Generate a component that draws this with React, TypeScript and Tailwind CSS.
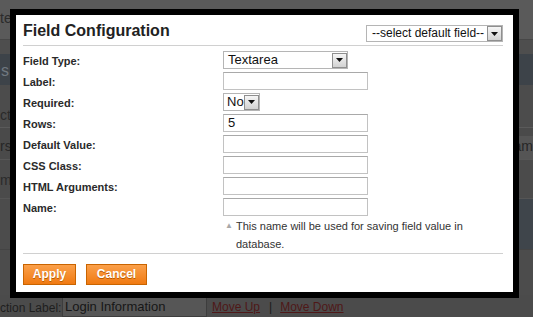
import React from "react";

function DropBtn({ className = "" }: { className?: string }) {
  return (
    <div
      className={
        "flex items-center justify-center w-[15px] h-[15px] border border-[#8f8f8f] bg-[linear-gradient(to_bottom,#f6f6f6,#d2d2d2)] " +
        className
      }
    >
      <svg width="7" height="4" viewBox="0 0 7 4">
        <path d="M0 0 L7 0 L3.5 4 Z" fill="#111" />
      </svg>
    </div>
  );
}

function TextInput({ value = "" }: { value?: string }) {
  return (
    <div className="w-[145px] h-[18px] border border-[#c2c2c2] border-t-[#a9a9a9] bg-white px-[4px] text-[13px] leading-[16px] text-[#111]">
      {value}
    </div>
  );
}

const rows: { label: string; control: React.ReactNode }[] = [
  {
    label: "Field Type:",
    control: (
      <div className="w-[125px] h-[18px] border border-[#b5b5b5] bg-white flex items-center justify-between pl-[4px] pr-[0px]">
        <span className="text-[13px] leading-[16px] text-[#111]">Textarea</span>
        <DropBtn />
      </div>
    ),
  },
  { label: "Label:", control: <TextInput /> },
  {
    label: "Required:",
    control: (
      <div className="w-[37px] h-[18px] border border-[#b5b5b5] bg-white flex items-center justify-between pl-[3px]">
        <span className="text-[13px] leading-[16px] text-[#111]">No</span>
        <DropBtn />
      </div>
    ),
  },
  { label: "Rows:", control: <TextInput value="5" /> },
  { label: "Default Value:", control: <TextInput /> },
  { label: "CSS Class:", control: <TextInput /> },
  { label: "HTML Arguments:", control: <TextInput /> },
  { label: "Name:", control: <TextInput /> },
];

export default function App() {
  return (
    <div
      className="relative w-[533px] h-[317px] overflow-hidden bg-[#4b4b4b]"
      style={{ fontFamily: '"Liberation Sans", Arial, sans-serif' }}
    >
      {/* dimmed page behind */}
      <div className="flex flex-col w-full h-full">
        <div className="h-[41px] bg-[#5a5a5a] border-b border-[#474747] text-[14px] text-[#2b2b2b] pt-[8px]">
          te
        </div>
        <div className="h-[14px] bg-[#4e4e4e]" />
        <div className="h-[32px] bg-[#3d4349] text-[16px] text-[#707880] pt-[5px] pl-[1px]">s</div>
        <div className="h-[43px] bg-[#4c4c4c] border-b border-[#5a5a5a] text-[14px] text-[#2a2a2a] pt-[20px]">
          cti
        </div>
        <div className="h-[33px] bg-[#4a4a4a] border-b border-[#575757] flex justify-between text-[14px] text-[#262626] pt-[8px]">
          <span>rs</span>
          <span className="bg-[#555] pl-[2px]">am</span>
        </div>
        <div className="h-[40px] bg-[#4b4b4b] text-[14px] text-[#2a2a2a] pt-[10px] border-b border-[#555]">
          m
        </div>
        <div className="h-[52px] bg-[#4c4c4c] flex justify-end border-b border-[#444]">
          <div className="w-[14px] h-full bg-[#3f454b]" />
        </div>
        <div className="h-[46px] bg-[#4c4c4c]" />
        <div className="flex-1 bg-[#4b4b4b] flex items-start pt-[2px] text-[#1e1e1e]">
          <span className="w-[60px] text-[12px] leading-[16px] mt-[3px] whitespace-nowrap">ction Label:</span>
          <div className="ml-[2px] w-[145px] h-[20px] border border-[#3d3d3d] bg-[#565656] px-[2px] text-[13px] leading-[18px] text-[#161616]">
            Login Information
          </div>
          <span className="ml-[5px] mt-[3px] text-[12px] leading-[15px] text-[#4f1818] underline">Move Up</span>
          <span className="ml-[9px] mt-[3px] text-[12px] leading-[15px] text-[#1a1a1a]">|</span>
          <span className="ml-[8px] mt-[3px] text-[12px] leading-[15px] text-[#4f1818] underline">Move Down</span>
        </div>
      </div>

      {/* modal */}
      <div className="absolute left-[10px] top-[9px] w-[509px] h-[289px] border-[6px] border-black bg-white">
        <div className="pl-[7px] pr-[10px] text-[#2f2f2f]">
          <div className="flex justify-between h-[31px] border-b border-[#d0d0d0]">
            <div className="mt-[7px] text-[16px] leading-[18px] font-bold text-[#222]">Field Configuration</div>
            <div className="mt-[10px] w-[137px] h-[17px] border border-[#b5b5b5] bg-white flex items-center justify-between pl-[5px]">
              <span className="text-[12px] leading-[15px] text-[#111]">--select default field--</span>
              <DropBtn />
            </div>
          </div>
          <div className="mt-[5px] flex flex-col">
            {rows.map((r) => (
              <div key={r.label} className="flex h-[21px] items-start">
                <div className="w-[200px] text-[11px] leading-[21px] font-bold text-[#2a2a2a]">{r.label}</div>
                {r.control}
              </div>
            ))}
          </div>
          <div className="flex ml-[202px] -mt-[2px] h-[36px]">
            <span className="w-[11px] text-[8px] leading-[18px] text-[#a8a8a8]">▲</span>
            <span className="w-[250px] text-[11px] leading-[18px] text-[#333]">
              This name will be used for saving field value in database.
            </span>
          </div>
          <div className="border-t border-[#d0d0d0] pt-[10px] flex gap-[10px]">
            <button className="w-[53px] h-[21px] border border-[#c96400] bg-[linear-gradient(to_bottom,#fba04a,#f07a12)] text-white text-[12px] font-bold leading-[19px] [text-shadow:0_1px_0_#b85a00]">
              Apply
            </button>
            <button className="w-[61px] h-[21px] border border-[#c96400] bg-[linear-gradient(to_bottom,#fba04a,#f07a12)] text-white text-[12px] font-bold leading-[19px] [text-shadow:0_1px_0_#b85a00]">
              Cancel
            </button>
          </div>
        </div>
      </div>
    </div>
  );
}
